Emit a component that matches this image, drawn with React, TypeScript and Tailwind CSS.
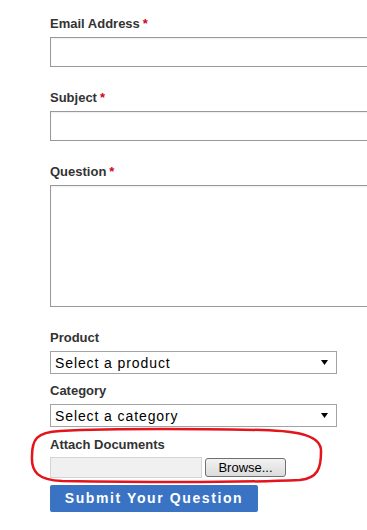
import React from 'react';

function Label({ text, required }: { text: string; required?: boolean }) {
  return (
    <div className="text-[13px] leading-[15px] font-bold text-[#333]">
      {text}
      {required && <span className="text-[#d0021b] ml-[3px]">*</span>}
    </div>
  );
}

function FakeSelect({ text }: { text: string }) {
  return (
    <div className="flex items-center justify-between w-[287px] h-[23px] border border-[#a3a3a3] bg-white pl-[4px] pr-[8px]">
      <span className="text-[14px] leading-[16px] tracking-[0.9px] text-black">{text}</span>
      <svg width="7" height="5" viewBox="0 0 7 5">
        <path d="M0 0 H7 L3.5 5 Z" fill="#000" />
      </svg>
    </div>
  );
}

export default function App() {
  return (
    <div className="relative w-[367px] h-[530px] overflow-hidden bg-white pt-[16px] pl-[50px] font-['Liberation_Sans',Arial,sans-serif]">
      {/* Email */}
      <Label text="Email Address" required />
      <div className="mt-[6px] w-[340px] h-[30px] border border-[#999] bg-white shadow-[inset_0_1px_2px_rgba(0,0,0,0.07)]" />

      {/* Subject */}
      <div className="mt-[23px]">
        <Label text="Subject" required />
      </div>
      <div className="mt-[6px] w-[340px] h-[30px] border border-[#999] bg-white shadow-[inset_0_1px_2px_rgba(0,0,0,0.07)]" />

      {/* Question */}
      <div className="mt-[23px]">
        <Label text="Question" required />
      </div>
      <div className="mt-[6px] w-[340px] h-[122px] border border-[#999] bg-white shadow-[inset_0_1px_2px_rgba(0,0,0,0.07)]" />

      {/* Product */}
      <div className="mt-[23px]">
        <Label text="Product" />
      </div>
      <div className="mt-[6px]">
        <FakeSelect text="Select a product" />
      </div>

      {/* Category */}
      <div className="mt-[9px]">
        <Label text="Category" />
      </div>
      <div className="mt-[6px]">
        <FakeSelect text="Select a category" />
      </div>

      {/* Attach */}
      <div className="mt-[10px]">
        <Label text="Attach Documents" />
      </div>
      <div className="mt-[5px] flex items-center gap-[3px]">
        <div className="w-[152px] h-[21px] bg-[#f0f0f0] border border-[#d4d4d4]" />
        <div className="w-[81px] h-[19px] rounded-[3px] border border-[#707070] bg-gradient-to-b from-[#f2f2f2] to-[#dcdcdc] flex items-center justify-center text-[13px] leading-[15px] text-black">
          Browse...
        </div>
      </div>

      {/* Submit */}
      <div className="mt-[7px] w-[208px] h-[27px] rounded-[2px] bg-[#3a73c3] flex items-center justify-center text-white text-[14px] font-bold tracking-[1.6px]">
        Submit Your Question
      </div>

      {/* red annotation */}
      <svg className="absolute left-0 top-0 pointer-events-none" width="367" height="530" viewBox="0 0 367 530">
        <path
          d="M60 431 C120 428 200 429 262 430 C300 431 322 436 321 452 C321 468 318 478 300 480 C230 483 120 482 62 481 C38 480 31 472 32 456 C32 440 36 432 60 431 Z"
          fill="none"
          stroke="#e3141b"
          strokeWidth="2.5"
        />
      </svg>
    </div>
  );
}
